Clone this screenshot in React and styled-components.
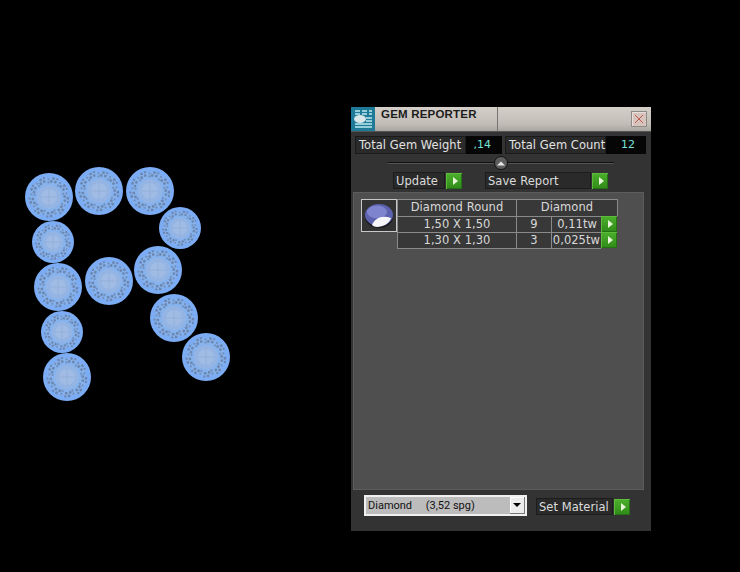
import React from 'react';
import styled, { createGlobalStyle } from 'styled-components';

const GlobalStyle = createGlobalStyle`
  html, body {
    margin: 0;
    padding: 0;
    background: #000;
  }
`;

const Desktop = styled.div`
  position: relative;
  width: 740px;
  height: 572px;
  overflow: hidden;
  background: #000;
  font-family: 'DejaVu Sans', sans-serif;
`;

const GemSvg = styled.svg`
  position: absolute;
  display: block;
`;

const Panel = styled.div`
  position: absolute;
  left: 351px;
  top: 107px;
  width: 300px;
  height: 424px;
  display: flex;
  flex-direction: column;
  background: #333333;
`;

const TitleBar = styled.div`
  height: 25px;
  display: flex;
  background: linear-gradient(#d4d0c9, #c2beb7 70%, #a8a5a0);
  border-bottom: 1px solid #555;
  box-sizing: border-box;
`;

const TitleIcon = styled.svg`
  width: 24px;
  height: 24px;
  display: block;
  flex: none;
`;

const TitleText = styled.div`
  width: 123px;
  padding: 1px 0 0 6px;
  box-sizing: border-box;
  flex: none;
  border-right: 1px solid #77746f;
  font-family: 'Liberation Sans', sans-serif;
  font-size: 11.5px;
  font-weight: 700;
  letter-spacing: 0.2px;
  color: #1c1c1c;
  white-space: nowrap;
`;

const TitleFill = styled.div`
  flex: 1;
  display: flex;
  justify-content: flex-end;
  padding: 4px 4px 0 0;
`;

const CloseBox = styled.div`
  width: 14px;
  height: 14px;
  background: #d6c4bd;
  border: 1px solid #8e8a86;
  box-shadow: inset 1px 1px 0 #e8dfda;
  display: flex;
  align-items: center;
  justify-content: center;
`;

const StatsRow = styled.div`
  display: flex;
  gap: 3px;
  padding: 4px 0 0 4px;
`;

const Stat = styled.div`
  display: flex;
  height: 18px;
`;

const StatLabel = styled.div`
  width: ${p => p.$w}px;
  box-sizing: border-box;
  background: #2a2a2a;
  border: 1px solid #1a1a1a;
  color: #e2e2e2;
  font-size: 11.5px;
  line-height: 16px;
  padding-left: 3px;
  letter-spacing: 0.05px;
  white-space: nowrap;
`;

const StatValue = styled.div`
  width: ${p => p.$w}px;
  box-sizing: border-box;
  background: #060606;
  color: #78e0d8;
  font-size: 11px;
  line-height: 17px;
  text-align: right;
  padding-right: ${p => p.$pr}px;
`;

const SliderRow = styled.div`
  position: relative;
  height: 18px;
  margin: 0 37px;
  display: flex;
  align-items: center;
`;

const SliderLine = styled.div`
  flex: 1;
  height: 1px;
  background: #111;
  border-bottom: 1px solid #555;
`;

const SliderKnob = styled.div`
  position: absolute;
  left: 106px;
  top: 2px;
  width: 14px;
  height: 14px;
  border-radius: 50%;
  background: #5e5e5e;
  border: 1px solid #111;
  box-sizing: border-box;
  display: flex;
  align-items: center;
  justify-content: center;
`;

const ButtonRow = styled.div`
  display: flex;
  justify-content: space-between;
  padding: 0 43px 0 42px;
`;

const ActionButton = styled.div`
  display: flex;
  align-items: center;
  gap: 1px;
`;

const ActionLabel = styled.div`
  width: ${p => p.$w}px;
  height: 17px;
  box-sizing: border-box;
  background: #2a2a2a;
  border: 1px solid #1c1c1c;
  color: #dcdcdc;
  font-size: 11.5px;
  line-height: 16px;
  padding-left: 2px;
  letter-spacing: 0.05px;
  white-space: nowrap;
`;

const GreenButton = styled.div`
  width: 16px;
  height: 16px;
  flex: none;
  background: linear-gradient(#4cb02c, #2f8a18);
  box-shadow: inset 1px 1px 0 #5cbb3a, inset -1px -1px 0 #256f14;
  display: flex;
  align-items: center;
  justify-content: center;
`;

const Arrow = styled.div`
  width: 0;
  height: 0;
  border-left: 5px solid #e6f5d8;
  border-top: 4px solid transparent;
  border-bottom: 4px solid transparent;
  margin-left: 2px;
`;

const Well = styled.div`
  height: 298px;
  margin: 3px 7px 0 2px;
  padding: 6px 0 0 7px;
  box-sizing: border-box;
  background: #4f4f4f;
  border: 1px solid #5c5c5c;
  display: flex;
  align-items: flex-start;
`;

const Thumb = styled.div`
  width: 36px;
  height: 33px;
  box-sizing: border-box;
  background: #333;
  border: 1px solid #c8c8c8;
  flex: none;
`;

const GemTable = styled.div`
  display: flex;
  flex-direction: column;
  width: 221px;
`;

const TableRow = styled.div`
  display: grid;
  grid-template-columns: ${p => p.$cols};
  height: ${p => p.$h}px;
`;

const Cell = styled.div`
  box-sizing: border-box;
  background: #383838;
  border-top: 1px solid #8a8a8a;
  border-left: 1px solid #8a8a8a;
  border-bottom: ${p => (p.$last ? '1px solid #8a8a8a' : 'none')};
  border-right: ${p => (p.$end ? '1px solid #8a8a8a' : 'none')};
  color: #d8d8d8;
  font-size: 11.5px;
  line-height: 15px;
  text-align: ${p => p.$align || 'center'};
  padding-right: ${p => p.$pr || 0}px;
  letter-spacing: 0.05px;
  white-space: nowrap;
`;

const Footer = styled.div`
  display: flex;
  align-items: flex-end;
  padding: 5px 0 0 13px;
`;

const Select = styled.div`
  width: 163px;
  height: 21px;
  box-sizing: border-box;
  background: #bcbcbc;
  border: 2px solid #f0f0f0;
  display: flex;
  align-items: center;
  justify-content: space-between;
  color: #111;
  font-family: 'Roboto', sans-serif;
  font-size: 11px;
  padding-left: 2px;
  white-space: pre;
`;

const SelectButton = styled.div`
  width: 15px;
  height: 17px;
  background: #ececec;
  border-right: 1px solid #777;
  border-bottom: 1px solid #777;
  box-sizing: border-box;
  box-shadow: inset 1px 1px 0 #fff;
  display: flex;
  align-items: center;
  justify-content: center;
`;

const SelectArrow = styled.div`
  width: 0;
  height: 0;
  border-top: 4px solid #000;
  border-left: 4px solid transparent;
  border-right: 4px solid transparent;
`;

const SetMaterial = styled(ActionButton)`
  margin: 0 0 1px 9px;
`;

const speckAngles = [12, 52, 92, 132, 172, 212, 252, 292, 332];

const Gem = ({ x, y, r }) => (
  <GemSvg
    viewBox="-24 -24 48 48"
    width={r * 2}
    height={r * 2}
    style={{ left: x - r, top: y - r }}
  >
    <circle r="24" fill="#7cadf4" />
    <circle r="19" fill="#86b3ee" />
    {speckAngles.map(a => (
      <g key={a} transform={`rotate(${a})`}>
        <path d="M14 -5h2.5v2.5h-2.5zM17.5 -4h2.5v2.5h-2.5zM15 -1h2.5v2.5h-2.5zM18.5 0h2v2h-2z" fill="#6d86ae" />
        <path d="M13 3h2v2h-2zM16 4h2v2h-2z" fill="#7390bd" />
      </g>
    ))}
    <circle r="12" fill="#94b4e4" />
    <circle r="8" fill="#a0bbe4" />
    <path d="M-9 0 H9 M0 -9 V9" stroke="#8fadda" strokeWidth="0.8" />
  </GemSvg>
);

const gems = [
  { x: 49, y: 197, r: 24 },
  { x: 99, y: 191, r: 24 },
  { x: 150, y: 191, r: 24 },
  { x: 180, y: 228, r: 21 },
  { x: 53, y: 242, r: 21 },
  { x: 58, y: 287, r: 24 },
  { x: 109, y: 281, r: 24 },
  { x: 158, y: 270, r: 24 },
  { x: 174, y: 318, r: 24 },
  { x: 62, y: 332, r: 21 },
  { x: 67, y: 377, r: 24 },
  { x: 206, y: 357, r: 24 },
];

const Go = () => (
  <GreenButton>
    <Arrow />
  </GreenButton>
);

const App = () => (
  <Desktop>
    <GlobalStyle />
    {gems.map(g => (
      <Gem key={`${g.x}-${g.y}`} {...g} />
    ))}
    <Panel>
      <TitleBar>
        <TitleIcon viewBox="0 0 24 24">
          <rect width="24" height="24" fill="#1f7a98" />
          <path
            d="M4 4h5M11 4h5M18 4h3M4 7h5M11 7h5M18 7h3M15 11h6M15 14h6M4 17h17M4 20h17"
            stroke="#bfeaf2"
            strokeWidth="1.4"
          />
          <ellipse cx="9" cy="12" rx="6" ry="4" fill="#d8e6e8" />
        </TitleIcon>
        <TitleText>GEM REPORTER</TitleText>
        <TitleFill>
          <CloseBox>
            <svg width="10" height="10" viewBox="0 0 10 10">
              <path d="M1 1L9 9M9 1L1 9" stroke="#c05a50" strokeWidth="1" />
            </svg>
          </CloseBox>
        </TitleFill>
      </TitleBar>
      <StatsRow>
        <Stat>
          <StatLabel $w={111}>Total Gem Weight</StatLabel>
          <StatValue $w={36} $pr={11}>,14</StatValue>
        </Stat>
        <Stat>
          <StatLabel $w={101}>Total Gem Count</StatLabel>
          <StatValue $w={40} $pr={11}>12</StatValue>
        </Stat>
      </StatsRow>
      <SliderRow>
        <SliderLine />
        <SliderKnob>
          <svg width="8" height="5" viewBox="0 0 8 5">
            <path d="M0 4.5L4 0.5L8 4.5Z" fill="#e8e8e8" />
          </svg>
        </SliderKnob>
      </SliderRow>
      <ButtonRow>
        <ActionButton>
          <ActionLabel $w={52}>Update</ActionLabel>
          <Go />
        </ActionButton>
        <ActionButton>
          <ActionLabel $w={106}>Save Report</ActionLabel>
          <Go />
        </ActionButton>
      </ButtonRow>
      <Well>
        <Thumb>
          <svg width="34" height="31" viewBox="0 0 34 31">
            <ellipse cx="17" cy="17" rx="14" ry="11" fill="#1b1b22" />
            <ellipse cx="17" cy="15" rx="14" ry="11" fill="#5c62ad" />
            <ellipse cx="15" cy="12" rx="10" ry="6.5" fill="#7f84cf" />
            <path d="M10 25C13 18 20 15 29 18C28 23 21 27 15 27C13 27 11 26 10 25Z" fill="#f6f6fa" />
          </svg>
        </Thumb>
        <GemTable>
          <TableRow $cols="119px 102px" $h={17}>
            <Cell>Diamond Round</Cell>
            <Cell $end>Diamond</Cell>
          </TableRow>
          <TableRow $cols="119px 35px 50px 17px" $h={16}>
            <Cell>1,50 X 1,50</Cell>
            <Cell>9</Cell>
            <Cell $align="right" $pr={4}>0,11tw</Cell>
            <Go />
          </TableRow>
          <TableRow $cols="119px 35px 50px 17px" $h={16}>
            <Cell $last>1,30 X 1,30</Cell>
            <Cell $last>3</Cell>
            <Cell $last $align="right" $pr={1}>0,025tw</Cell>
            <Go />
          </TableRow>
        </GemTable>
      </Well>
      <Footer>
        <Select>
          {'Diamond     (3,52 spg)'}
          <SelectButton>
            <SelectArrow />
          </SelectButton>
        </Select>
        <SetMaterial>
          <ActionLabel $w={77}>Set Material</ActionLabel>
          <Go />
        </SetMaterial>
      </Footer>
    </Panel>
  </Desktop>
);

export default App;
